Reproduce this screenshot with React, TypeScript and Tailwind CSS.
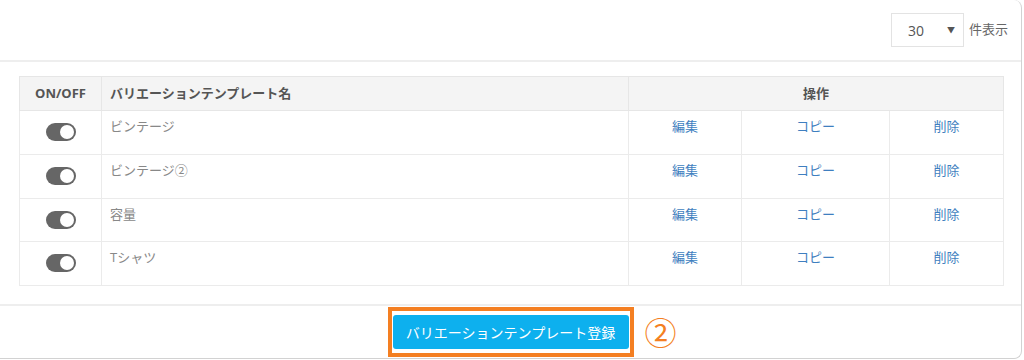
const rows = ['ビンテージ', 'ビンテージ②', '容量', 'Tシャツ'];

const font = { fontFamily: '"Open Sans", "Noto Sans CJK JP", sans-serif' };

function Toggle() {
  return (
    <span className="relative inline-flex h-[18px] w-[30px] items-center justify-end rounded-full bg-[#666] px-[2px]">
      <span className="h-[14px] w-[14px] rounded-full bg-white" />
    </span>
  );
}

export default function App() {
  return (
    <div className="h-[360px] w-[1024px] bg-white" style={font}>
      <div className="flex h-[359px] w-[1022px] flex-col rounded-r-[8px] border-r border-b border-[#d2d2d2] bg-white">
        <div className="flex h-[60px] items-center justify-end pr-[13px]">
          <div className="flex h-[34px] w-[73px] items-center justify-between border border-[#e3e3e3] pl-[16px] pr-[8px] text-[14px] text-[#555]">
            <span>30</span>
            <span className="text-[8px] text-[#555]">▼</span>
          </div>
          <span className="ml-[5px] text-[13px] text-[#666]">件表示</span>
        </div>
        <div className="h-[2px] bg-[#eeeeee]" />
        <div className="px-[19px] pt-[14px] pb-[18px]">
          <table className="w-[984px] table-fixed border-collapse text-[13px]">
            <colgroup>
              <col className="w-[82px]" />
              <col className="w-[527px]" />
              <col className="w-[113px]" />
              <col className="w-[148px]" />
              <col className="w-[114px]" />
            </colgroup>
            <thead>
              <tr className="h-[34px] bg-[#f4f4f4] font-bold text-[#555]">
                <th className="border border-[#e6e6e6] text-center">ON/OFF</th>
                <th className="border border-[#e6e6e6] pl-[8px] text-left">バリエーションテンプレート名</th>
                <th colSpan={3} className="border border-[#e6e6e6] text-center">操作</th>
              </tr>
            </thead>
            <tbody>
              {rows.map((name) => (
                <tr key={name} className="h-[43.75px] align-top">
                  <td className="border border-[#ebebeb] pt-[12px] text-center">
                    <Toggle />
                  </td>
                  <td className="border border-[#ebebeb] pt-[6px] pl-[8px] text-[#888]">{name}</td>
                  <td className="border border-[#ebebeb] pt-[6px] text-center text-[#3f7fc0]">編集</td>
                  <td className="border border-[#ebebeb] pt-[6px] text-center text-[#3f7fc0]">コピー</td>
                  <td className="border border-[#ebebeb] pt-[6px] text-center text-[#3f7fc0]">削除</td>
                </tr>
              ))}
            </tbody>
          </table>
        </div>
        <div className="h-[2px] bg-[#eeeeee]" />
        <div className="flex flex-1 items-start justify-center pt-[1px]">
          <div className="relative border-[4px] border-[#f47f22] px-[1px] py-[4px]">
            <button className="h-[34px] w-[236px] rounded-[3px] bg-[#0db0ee] text-[14px] text-white">
              バリエーションテンプレート登録
            </button>
            <span className="absolute top-[2px] left-[253px] text-[32px] leading-[40px] text-[#f47f22]">②</span>
          </div>
        </div>
      </div>
    </div>
  );
}
